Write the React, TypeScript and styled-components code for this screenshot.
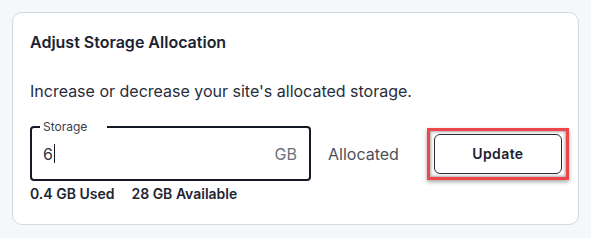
import React from 'react';
import styled, { createGlobalStyle } from 'styled-components';

const GlobalStyle = createGlobalStyle`
  html, body {
    margin: 0;
    padding: 0;
    background: #f5f8fb;
    font-family: Inter, "Noto Sans", sans-serif;
    color: #1f2533;
  }
`;

const Page = styled.div`
  padding: 12px;
  width: 567px;
`;

const Card = styled.section`
  background: #ffffff;
  border: 1px solid #d4d8de;
  border-radius: 10px;
  padding: 19px 17px 0 17px;
  height: 213px;
  box-sizing: border-box;
`;

const Title = styled.h2`
  margin: 0;
  font-size: 16px;
  line-height: 20px;
  font-weight: 600;
  color: #1c2230;
`;

const Description = styled.p`
  margin: 27px 0 0;
  font-size: 16px;
  line-height: 24px;
  color: #272d3a;
`;

const Row = styled.div`
  display: flex;
  align-items: center;
  margin-top: 23px;
`;

const Field = styled.div`
  position: relative;
  flex-shrink: 0;
  width: 281px;
  height: 55px;
  box-sizing: border-box;
  border: 2px solid #141925;
  border-radius: 4px;
  display: flex;
  align-items: center;
  padding: 0 12px 0 11px;
`;

const FieldLabel = styled.span`
  position: absolute;
  top: -9px;
  left: 8px;
  padding: 0 20px 0 3px;
  background: #ffffff;
  font-size: 12px;
  line-height: 16px;
  color: #3a404c;
`;

const Value = styled.span`
  flex: 1;
  font-size: 16px;
  color: #2a3242;
  display: flex;
  align-items: center;
`;

const Caret = styled.span`
  display: inline-block;
  width: 1.5px;
  height: 19px;
  background: #141925;
  margin-left: 1px;
`;

const Unit = styled.span`
  font-size: 16px;
  color: #6b717c;
`;

const Allocated = styled.span`
  flex-shrink: 0;
  margin-left: 17px;
  font-size: 16px;
  color: #4a505c;
`;

const Highlight = styled.div`
  flex-shrink: 0;
  margin-left: 28px;
  border: 3px solid #f0454b;
  padding: 3px 4px;
  box-shadow: 0 2px 4px rgba(0, 0, 0, 0.35), inset 0 0 3px 1px rgba(0, 0, 0, 0.35);
`;

const Button = styled.button`
  display: block;
  width: 128px;
  height: 40px;
  background: #ffffff;
  border: 1px solid #262c39;
  border-radius: 6px;
  font-family: Inter, "Noto Sans", sans-serif;
  font-size: 14px;
  font-weight: 600;
  letter-spacing: 0.4px;
  color: #1c2230;
  cursor: pointer;
`;

const Usage = styled.div`
  display: flex;
  gap: 17px;
  margin-top: 4px;
  font-size: 14px;
  line-height: 18px;
  font-weight: 600;
  color: #1f2533;
`;

export default function App() {
  return (
    <>
      <GlobalStyle />
      <Page>
        <Card>
          <Title>Adjust Storage Allocation</Title>
          <Description>Increase or decrease your site's allocated storage.</Description>
          <Row>
            <Field>
              <FieldLabel>Storage</FieldLabel>
              <Value>
                6<Caret />
              </Value>
              <Unit>GB</Unit>
            </Field>
            <Allocated>Allocated</Allocated>
            <Highlight>
              <Button>Update</Button>
            </Highlight>
          </Row>
          <Usage>
            <span>0.4 GB Used</span>
            <span>28 GB Available</span>
          </Usage>
        </Card>
      </Page>
    </>
  );
}
